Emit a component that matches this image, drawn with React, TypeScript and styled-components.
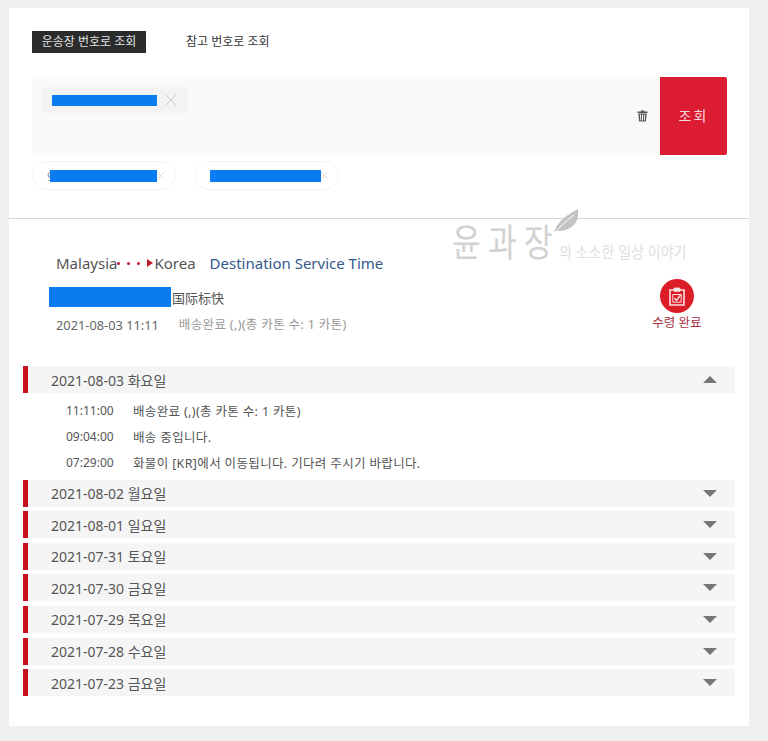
import styled, { createGlobalStyle } from "styled-components";

const GlobalStyle = createGlobalStyle`
  html, body {
    margin: 0;
    padding: 0;
    background: #f0f0f0;
  }
  * {
    box-sizing: border-box;
  }
`;

const Page = styled.div`
  width: 768px;
  height: 741px;
  padding: 8px 19px 15px 9px;
  background: #f0f0f0;
  font-family: "Noto Sans", "Noto Sans CJK KR", sans-serif;
  overflow: hidden;
`;

const Card = styled.div`
  position: relative;
  height: 718px;
  background: #fff;
`;

const SearchSection = styled.div`
  height: 211px;
  padding: 23px 22px 0 23px;
  border-bottom: 1px solid #d6d6d6;
`;

const Tabs = styled.div`
  display: flex;
  align-items: center;
  gap: 40px;
  height: 22px;
`;

const Tab = styled.div<{ $active?: boolean }>`
  width: ${(p) => (p.$active ? "114px" : "auto")};
  height: 22px;
  line-height: 22px;
  text-align: center;
  font-size: 12px;
  color: ${(p) => (p.$active ? "#e4e4e4" : "#333")};
  background: ${(p) => (p.$active ? "#2b2b2b" : "transparent")};
`;

const SearchRow = styled.div`
  display: flex;
  height: 78px;
  margin-top: 24px;
`;

const InputBox = styled.div`
  flex: 1;
  display: flex;
  justify-content: space-between;
  padding: 10px 12px 0 10px;
  background: #f9f9f9;
`;

const Chip = styled.div`
  display: flex;
  align-items: center;
  gap: 8px;
  width: 146px;
  height: 26px;
  padding-left: 10px;
  background: #f3f3f3;
`;

const Redact = styled.span<{ $width: number; $height: number }>`
  display: block;
  flex: none;
  width: ${(p) => p.$width}px;
  height: ${(p) => p.$height}px;
  background: #0a7cf0;
`;

const TrashButton = styled.div`
  display: flex;
  align-items: center;
  height: 58px;
  color: #555;
`;

const SearchButton = styled.div`
  display: flex;
  align-items: center;
  justify-content: center;
  width: 67px;
  padding-bottom: 2px;
  background: #dc1c32;
  border-radius: 0 2px 2px 0;
  color: #f6d9dc;
  font-size: 14px;
  letter-spacing: 2px;
`;

const PillRow = styled.div`
  display: flex;
  gap: 19px;
  margin-top: 6px;
`;

const Pill = styled.div<{ $inset: number }>`
  display: flex;
  align-items: center;
  width: 144px;
  height: 29px;
  padding-left: ${(p) => p.$inset}px;
  border: 1px solid #f3f3f3;
  border-radius: 15px;
  color: #bbb;
`;

const PeekDigit = styled.span`
  margin-right: -4px;
  font-size: 13px;
  color: #8a98a6;
`;

const Watermark = styled.div`
  position: absolute;
  left: 443px;
  top: 200px;
  display: flex;
  align-items: flex-end;
  height: 56px;
  pointer-events: none;
`;

const WatermarkName = styled.span`
  width: 107px;
  margin-bottom: 2px;
  font-size: 38px;
  line-height: 42px;
  letter-spacing: 9px;
  color: #d2d2d2;
  white-space: nowrap;
  transform: scaleX(0.82);
  transform-origin: left center;
`;

const WatermarkTag = styled.span`
  margin-bottom: 2px;
  font-size: 16px;
  line-height: 20px;
  color: #dedede;
  transform: scaleX(0.88);
  transform-origin: left center;
  white-space: nowrap;
`;

const Feather = styled.svg`
  position: absolute;
  left: 101px;
  top: 0;
`;

const Summary = styled.div`
  display: flex;
  justify-content: space-between;
  height: 147px;
  padding: 34px 40px 0 40px;
`;

const RouteLine = styled.div`
  display: flex;
  align-items: center;
  height: 20px;
  padding-left: 7px;
  font-size: 15px;
  color: #555;
`;

const Dots = styled.span`
  display: flex;
  align-items: center;
  gap: 7px;
  margin-right: 1px;
`;

const Dot = styled.i`
  display: block;
  width: 3px;
  height: 3px;
  border-radius: 50%;
  background: #c01a2c;
`;

const Arrow = styled.i`
  display: block;
  width: 0;
  height: 0;
  border-left: 6px solid #c01a2c;
  border-top: 4px solid transparent;
  border-bottom: 4px solid transparent;
`;

const ServiceName = styled.span`
  margin-left: 14px;
  color: #33598c;
`;

const CarrierLine = styled.div`
  display: flex;
  align-items: center;
  gap: 1px;
  margin-top: 14px;
  font-size: 13px;
  color: #555;
`;

const LatestLine = styled.div`
  display: flex;
  gap: 20px;
  margin-top: 8px;
  padding-left: 7px;
  font-size: 12.8px;
  line-height: 20px;
  color: #666;
`;

const LatestStatus = styled.span`
  color: #999;
  font-size: 12.5px;
  letter-spacing: 0.35px;
`;

const StatusBlock = styled.div`
  display: flex;
  flex-direction: column;
  align-items: center;
  width: 56px;
  margin: 26px 4px 0 0;
`;

const StatusIcon = styled.div`
  display: flex;
  align-items: center;
  justify-content: center;
  width: 34px;
  height: 34px;
  border-radius: 50%;
  background: #dc1c26;
`;

const StatusLabel = styled.div`
  margin-top: 2px;
  font-size: 12.5px;
  line-height: 16px;
  color: #a83040;
  white-space: nowrap;
`;

const Timeline = styled.div`
  margin: 0 14px 0 14px;
`;

const DayRow = styled.div`
  display: flex;
  align-items: center;
  justify-content: space-between;
  height: 27px;
  margin-bottom: 4.6px;
  padding: 0 18px 0 23px;
  border-left: 5px solid #c8101e;
  background: #f5f5f5;
  font-size: 14px;
  color: #555;
`;

const Caret = styled.i<{ $up?: boolean }>`
  display: block;
  width: 0;
  height: 0;
  border-left: 7.5px solid transparent;
  border-right: 7.5px solid transparent;
  border-top: ${(p) => (p.$up ? "0" : "7px solid #777")};
  border-bottom: ${(p) => (p.$up ? "7px solid #777" : "0")};
`;

const Events = styled.div`
  margin-top: 1px;
  padding: 0 0 4px 43px;
`;

const EventRow = styled.div`
  display: flex;
  height: 26px;
  align-items: center;
  font-size: 12.5px;
  letter-spacing: 0.35px;
  color: #555;
`;

const EventTime = styled.span`
  width: 67px;
  font-size: 12px;
  letter-spacing: 0;
`;

const CloseIcon = ({ size, color }: { size: number; color: string }) => (
  <svg width={size} height={size} viewBox="0 0 12 12" fill="none" stroke={color} strokeWidth="1">
    <path d="M1 1l10 10M11 1L1 11" />
  </svg>
);

const days = [
  { label: "2021-08-02 월요일" },
  { label: "2021-08-01 일요일" },
  { label: "2021-07-31 토요일" },
  { label: "2021-07-30 금요일" },
  { label: "2021-07-29 목요일" },
  { label: "2021-07-28 수요일" },
  { label: "2021-07-23 금요일" },
];

const events = [
  { time: "11:11:00", text: "배송완료 (,)(총 카톤 수: 1 카톤)" },
  { time: "09:04:00", text: "배송 중입니다." },
  { time: "07:29:00", text: "화물이 [KR]에서 이동됩니다. 기다려 주시기 바랍니다." },
];

const App = () => {
  return (
    <Page>
      <GlobalStyle />
      <Card>
        <SearchSection>
          <Tabs>
            <Tab $active>운송장 번호로 조회</Tab>
            <Tab>참고 번호로 조회</Tab>
          </Tabs>
          <SearchRow>
            <InputBox>
              <Chip>
                <Redact $width={105} $height={11} />
                <CloseIcon size={12} color="#c8c8c8" />
              </Chip>
              <TrashButton>
                <svg width="11" height="12" viewBox="0 0 11 12" fill="currentColor">
                  <path d="M0.5 1.6h10v1.3h-10zM3.8 0.6h3.4v1h-3.4z" />
                  <path d="M1.3 3.4h8.4l-0.8 8.2h-6.8zM3 4.6l0.3 6h0.9l-0.2-6zM5 4.6v6h1v-6zM7.1 4.6l-0.2 6h0.9l0.3-6z" fillRule="evenodd" />
                </svg>
              </TrashButton>
            </InputBox>
            <SearchButton>조회</SearchButton>
          </SearchRow>
          <PillRow>
            <Pill $inset={14}>
              <PeekDigit>9</PeekDigit>
              <Redact $width={107} $height={12} />
              <CloseIcon size={7} color="#c4c4c4" />
            </Pill>
            <Pill $inset={14}>
              <Redact $width={111} $height={12} />
              <CloseIcon size={7} color="#c4c4c4" />
            </Pill>
          </PillRow>
        </SearchSection>

        <Watermark>
          <Feather width="26" height="26" viewBox="0 0 26 26">
            <path d="M1 25C3 17 9 9 25 1c1 8-1 15-8 19-5 3-10 3-13 3z" fill="#c4c4c4" />
            <path d="M1 25C7 19 13 13 21 7" stroke="#fff" strokeWidth="1" fill="none" />
          </Feather>
          <WatermarkName>윤과장</WatermarkName>
          <WatermarkTag>의 소소한 일상 이야기</WatermarkTag>
        </Watermark>

        <Summary>
          <div>
            <RouteLine>
              Malaysia
              <Dots>
                <Dot />
                <Dot />
                <Dot />
                <Arrow />
              </Dots>
              Korea
              <ServiceName>Destination Service Time</ServiceName>
            </RouteLine>
            <CarrierLine>
              <Redact $width={122} $height={20} />
              国际标快
            </CarrierLine>
            <LatestLine>
              <span>2021-08-03 11:11</span>
              <LatestStatus>배송완료 (,)(총 카톤 수: 1 카톤)</LatestStatus>
            </LatestLine>
          </div>
          <StatusBlock>
            <StatusIcon>
              <svg width="16" height="19" viewBox="0 0 16 19" fill="none" stroke="#f7e3e3" strokeWidth="1.6">
                <path d="M5 3H1v15h14V3h-4" />
                <path d="M5 1h6v3.4H5z" fill="#f7e3e3" strokeWidth="0.8" />
                <path d="M3.8 7.5h8.4v7.7H3.8z" strokeWidth="1" />
                <path d="M5.5 11l2 2.4 4-5.4" strokeWidth="1.4" />
              </svg>
            </StatusIcon>
            <StatusLabel>수령 완료</StatusLabel>
          </StatusBlock>
        </Summary>

        <Timeline>
          <DayRow>
            2021-08-03 화요일
            <Caret $up />
          </DayRow>
          <Events>
            {events.map((event) => (
              <EventRow key={event.time}>
                <EventTime>{event.time}</EventTime>
                {event.text}
              </EventRow>
            ))}
          </Events>
          {days.map((day) => (
            <DayRow key={day.label}>
              {day.label}
              <Caret />
            </DayRow>
          ))}
        </Timeline>
      </Card>
    </Page>
  );
};

export default App;
